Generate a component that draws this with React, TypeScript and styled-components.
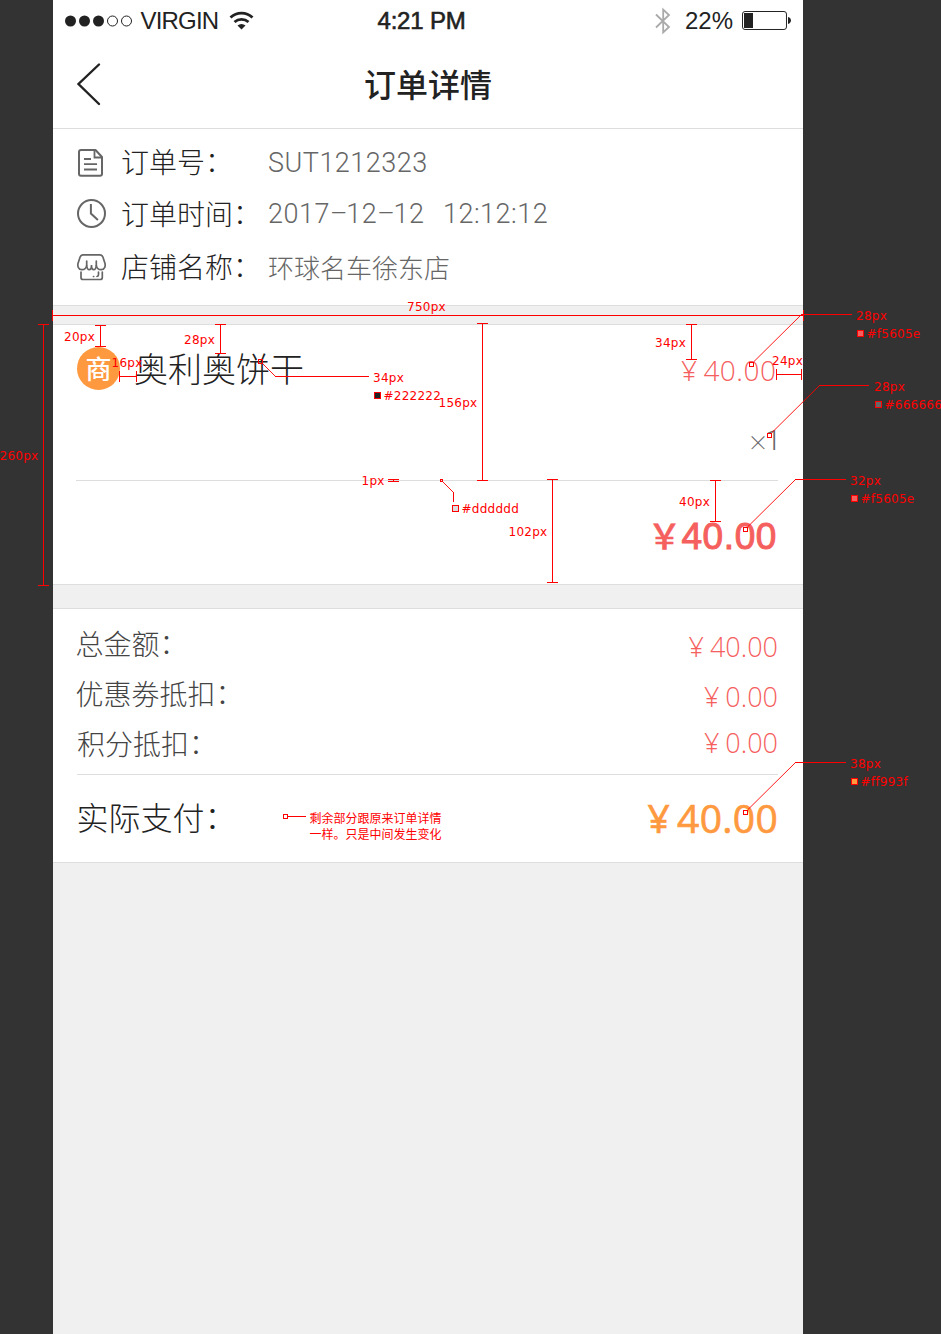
import React from "react";
import styled, { createGlobalStyle } from "styled-components";

const CJK = '"Noto Sans CJK SC", sans-serif';
const HELV = '"Liberation Sans", sans-serif';
const OPEN = '"Open Sans", "Noto Sans CJK SC", sans-serif';

const GlobalStyle = createGlobalStyle`
  * { box-sizing: border-box; }
  body { margin: 0; background: #333; overflow: hidden; }
`;

const Board = styled.main`
  position: relative;
  width: 941px;
  height: 1334px;
  padding-left: 53px;
  background: #333;
  overflow: hidden;
`;

const Phone = styled.div`
  width: 750px;
  height: 1334px;
  background: #f0f0f0;
  color: #222;
  font-family: ${CJK};
`;

const StatusBar = styled.div`
  display: grid;
  grid-template-columns: 312.5px 1fr 137px;
  align-items: center;
  height: 40px;
  padding: 1px 11px 0 12px;
  background: #fff;
  font: 24px/40px ${HELV};
`;

const StatusGroup = styled.div`
  display: flex;
  align-items: center;
  height: 40px;
`;

const StatusText = styled.span<{ $left?: number; $spacing?: number; $stroke?: number }>`
  margin-left: ${(p) => p.$left ?? 0}px;
  letter-spacing: ${(p) => p.$spacing ?? 0}px;
  -webkit-text-stroke: ${(p) => p.$stroke ?? 0}px #222;
  white-space: nowrap;
`;

const WifiIcon = styled.svg`
  margin-left: 11px;
`;

const BatteryIcon = styled.svg`
  margin-left: 9px;
`;

const NavBar = styled.header`
  display: grid;
  grid-template-columns: 88px 1fr 88px;
  align-items: center;
  height: 89px;
  border-bottom: 1px solid #ddd;
  background: #fff;
`;

const Title = styled.h1`
  margin: 0;
  padding-bottom: 2px;
  text-align: center;
  font: 500 32px/86px ${CJK};
`;

const BackIcon = styled.svg`
  margin-left: 23px;
`;

const Info = styled.section`
  height: 177px;
  padding: 8px 24px 0 23px;
  border-bottom: 1px solid #ddd;
  background: #fff;
`;

const InfoRow = styled.div<{ $height: number }>`
  display: grid;
  grid-template-columns: 45px 147px 1fr;
  align-items: center;
  height: ${(p) => p.$height}px;
`;

const Label = styled.span<{ $drop?: number }>`
  padding: ${(p) => p.$drop ?? 0}px 0 4px;
  font: 300 28px/44px ${CJK};
  white-space: pre;
`;

const Colon = styled.span`
  line-height: 1;
  vertical-align: 1px;
`;

const Value = styled.span<{ $cjk?: boolean }>`
  color: #666;
  font: 300 ${(p) => (p.$cjk ? 26 : 27)}px/50px ${(p) => (p.$cjk ? CJK : "Roboto, sans-serif")};
  letter-spacing: ${(p) => (p.$cjk ? 0 : 0.5)}px;
  word-spacing: 2.2px;
  white-space: pre;
`;

const Dash = styled.span`
  letter-spacing: -1.3px;
`;

const Panel = styled.section<{ $gap: number }>`
  margin-top: ${(p) => p.$gap}px;
  border-top: 1px solid #ddd;
  border-bottom: 1px solid #ddd;
  background: #fff;
`;

const Product = styled.div`
  display: grid;
  grid-template-columns: 44px 1fr auto;
  grid-template-rows: 87px 67px;
  column-gap: 14px;
  height: 156px;
  margin: 0 25px 0 23px;
  border-bottom: 1px solid #ddd;
`;

const Badge = styled.span`
  align-self: center;
  width: 43px;
  height: 43px;
  margin-left: 1px;
  border-radius: 50%;
  background: #ff993f;
  color: #fff;
  text-align: center;
  font: 500 26px/42px ${CJK};
`;

const ProductName = styled.span`
  padding-bottom: 2px;
  font: 300 34px/85px ${CJK};
`;

const Quantity = styled.span`
  grid-column: 3;
  justify-self: end;
  display: flex;
  margin-right: -3px;
  color: #666;
  font: 300 28px/58px Roboto, sans-serif;
`;

const Times = styled.span`
  margin-right: -3px;
  font: 300 21px/59px ${CJK};
`;

const Price = styled.span<{ $shift?: number }>`
  display: flex;
  align-items: baseline;
  justify-content: flex-end;
  margin-top: ${(p) => p.$shift ?? 0}px;
  color: #f5605e;
  font: 300 27px/50px ${OPEN};
  white-space: nowrap;
`;

const ProductPrice = styled(Price)`
  align-self: center;
  padding: 2px 1.5px 0 0;
  font-size: 28px;
  letter-spacing: 0.5px;
`;

const Yen = styled.span<{ $gap: number }>`
  margin-right: ${(p) => p.$gap}px;
`;

const WideYen = styled.span`
  font: 500 34px/1 ${CJK};
  letter-spacing: 0;
  -webkit-text-stroke: 0.5px #f5605e;
`;

const Subtotal = styled.div`
  display: flex;
  align-items: baseline;
  justify-content: flex-end;
  height: 103px;
  padding: 4px 26px 0 0;
  color: #f5605e;
  font: 37px/103px ${HELV};
  letter-spacing: 0.6px;
  -webkit-text-stroke: 1px #f5605e;
`;

const Summary = styled.div`
  height: 166px;
  margin: 0 25px 0 24px;
  padding-top: 10px;
  border-bottom: 1px solid #ddd;
`;

const SummaryRow = styled.div<{ $shift?: number }>`
  display: flex;
  justify-content: space-between;
  align-items: flex-start;
  height: 50px;
  margin-left: ${(p) => p.$shift ?? 0}px;
  color: #444;
`;

const Payment = styled.div`
  display: flex;
  justify-content: space-between;
  align-items: flex-start;
  height: 87px;
  margin: 0 25px 0 23.5px;
  font: 300 32px/82px ${CJK};
`;

const PaymentPrice = styled(Price)`
  color: #ff993f;
  font: 500 39px/86px ${OPEN};
  letter-spacing: 0.3px;
  -webkit-text-stroke: 0.7px #ff993f;
`;

const Overlay = styled.svg`
  position: absolute;
  inset: 0;
  pointer-events: none;
`;

const Tag = styled.span<{ $x: number; $y: number }>`
  position: absolute;
  left: ${(p) => p.$x}px;
  top: ${(p) => p.$y}px;
  color: #f00;
  font: 12px/14px "DejaVu Sans", sans-serif;
  letter-spacing: 0.25px;
  white-space: nowrap;
`;

const Note = styled.p`
  position: absolute;
  left: 309.5px;
  top: 810px;
  margin: 0;
  color: #f00;
  font: 12px/16px ${CJK};
  white-space: nowrap;
`;

const RowDoc = () => (
  <svg width="30" height="30" viewBox="0 0 30 30" fill="none" stroke="#666" strokeWidth="2">
    <path d="M5 2H19.500L26 9v16.700a2 2 0 0 1-2 2H5a2 2 0 0 1-2-2V4a2 2 0 0 1 2-2Z" strokeLinejoin="round" />
    <path d="M18.500 2v7.500h7.500M8 11h7M8 16.200h13M8 21.500h13" strokeWidth="1.800" />
  </svg>
);

const RowClock = () => (
  <svg width="30" height="30" viewBox="0 0 30 30" fill="none" stroke="#666" strokeWidth="2">
    <circle cx="15.500" cy="14.500" r="13.500" />
    <path d="M14.900 5v9.500l7 6.500" />
  </svg>
);

const RowShop = () => (
  <svg width="30" height="30" viewBox="0 0 30 30" fill="none" stroke="#666" strokeWidth="1.7" strokeLinecap="round">
    <path d="M7 2.800h17c1.300 0 2.300.8 2.900 2.200L29 11.500c.6 2.700-.4 6.200-3.800 6.200-3 0-4.700-2-4.900-4.700-.2 2.800-.9 4.700-2.500 4.700s-2.300-2-2.300-4.700c0 2.700-.7 4.700-2.300 4.700s-2.300-1.900-2.500-4.700c-.2 2.700-1.900 4.700-4.900 4.700-3.400 0-4.400-3.500-3.800-6.200L4.100 5c.6-1.400 1.600-2.200 2.900-2.200Z" />
    <path d="M10.700 13V9M20.300 13V9M5 20v5.500c0 1.200.8 2 2 2h17.300c1.200 0 2-.8 2-2V20M22.500 20v2.800c0 1-.6 1.600-1.500 1.700M17.500 24.500h.2" />
  </svg>
);

type Dim = [number, number, number];
const vertical: Dim[] = [
  [100, 325, 346], [220, 324, 353], [43, 324, 585], [482, 323, 480],
  [691, 324, 359], [552, 479, 582], [715, 480, 521],
];
const horizontal: Dim[] = [[315, 52, 803], [376, 119, 136], [374, 776, 801]];

const vPath = ([x, a, b]: Dim) =>
  `M${x + 0.5} ${a}V${b + 1}M${x - 5} ${a + 0.5}h11M${x - 5} ${b + 0.5}h11`;
const hPath = ([y, a, b]: Dim) =>
  `M${a} ${y + 0.5}H${b + 1}M${a + 0.5} ${y - 5}v11M${b + 0.5} ${y - 5}v11`;

const leaders = [
  { box: [258, 359], line: "M263 364L275.500 376.500", run: "M275 376.500H369" },
  { box: [749, 362], line: "M754 361.500L801.500 314.500", run: "M801 314.500H852" },
  { box: [767, 433], line: "M772 432.500L819.500 385.500", run: "M819 385.500H869" },
  { box: [743, 527], line: "M748 526.500L795.500 479.500", run: "M795 479.500H846" },
  { box: [743, 810], line: "M748 809.500L795.500 762.500", run: "M795 762.500H846" },
  { box: [283, 814], line: "", run: "M288 816.500H306" },
];

const swatches: [number, number, string][] = [
  [374, 392, "#222222"], [857, 330, "#f5605e"], [875, 401, "#666666"],
  [452, 505, "#dddddd"], [851, 495, "#f5605e"], [851, 778, "#ff993f"],
];

const tags: [number, number, string][] = [
  [407, 300, "750px"], [64, 330, "20px"], [184, 333, "28px"], [-0.5, 449, "260px"],
  [111.5, 356, "16px"], [373, 371, "34px"], [383.5, 389, "#222222"], [438.5, 396, "156px"],
  [655, 336, "34px"], [772, 354, "24px"], [856, 309, "28px"], [866.5, 327, "#f5605e"],
  [874, 380, "28px"], [884.5, 398, "#666666"], [361.5, 474, "1px"], [461.5, 502, "#dddddd"],
  [508.5, 525, "102px"], [679, 495, "40px"], [850, 474, "32px"], [860.5, 492, "#f5605e"],
  [850, 757, "38px"], [860.5, 775, "#ff993f"],
];

const Annotations = () => (
  <>
    <Overlay width="941" height="1334" fill="none" stroke="#f00">
      {vertical.map((d) => <path key={d.join()} d={vPath(d)} />)}
      {horizontal.map((d) => <path key={d.join()} d={hPath(d)} />)}
      {leaders.map(({ box: [x, y], line, run }) => (
        <g key={`${x}-${y}`}>
          <rect x={x + 0.5} y={y + 0.5} width="4" height="4" />
          {line && <path d={line} strokeWidth="0.9" />}
          <path d={run} />
        </g>
      ))}
      <path d="M388 479.500h11M388 481.500h11M393.500 480v1" />
      <rect x="440.500" y="479.500" width="2" height="2" />
      <path d="M443 482L453.500 492.500" strokeWidth="0.9" />
      <path d="M453.500 492V502" />
      {swatches.map(([x, y, c]) => (
        <rect key={`${x}-${y}`} x={x + 0.5} y={y + 0.5} width="6" height="6" fill={c} />
      ))}
    </Overlay>
    {tags.map(([x, y, text]) => (
      <Tag key={`${x}-${y}`} $x={x} $y={y}>{text}</Tag>
    ))}
    <Note>剩余部分跟原来订单详情<br />一样。只是中间发生变化</Note>
  </>
);

export default function App() {
  return (
    <>
      <GlobalStyle />
      <Board>
        <Phone>
          <StatusBar>
            <StatusGroup>
              <svg width="68" height="12" fill="#222">
                <circle cx="5.500" cy="6" r="5.500" />
                <circle cx="19.500" cy="6" r="5.500" />
                <circle cx="33.500" cy="6" r="5.500" />
                <circle cx="47.500" cy="6" r="5" fill="none" stroke="#222" />
                <circle cx="61.500" cy="6" r="5" fill="none" stroke="#222" />
              </svg>
              <StatusText $left={7.5} $spacing={-0.8}>VIRGIN</StatusText>
              <WifiIcon width="26" height="20" viewBox="0 0 26 20" fill="none" stroke="#222" strokeWidth="2.800">
                <path d="M1.500 6.500a16 16 0 0 1 22 0M5.500 11a10.500 10.500 0 0 1 14 0" />
                <path d="M12.500 18.500l-4-4a6 6 0 0 1 8 0Z" fill="#222" stroke="none" />
              </WifiIcon>
            </StatusGroup>
            <StatusText $spacing={-0.2} $stroke={0.6}>4:21 PM</StatusText>
            <StatusGroup>
              <svg width="16" height="28" viewBox="0 0 16 28" fill="none" stroke="#aaa" strokeWidth="1.800">
                <path d="M1 7.500L14 20l-5.800 5.500V2.500L14 8 1 20.500" />
              </svg>
              <StatusText $left={14}>22%</StatusText>
              <BatteryIcon width="50" height="20" viewBox="0 0 50 20">
                <rect x=".5" y=".5" width="44" height="18" rx="2.500" fill="none" stroke="#222" />
                <rect x="2" y="2" width="9" height="15" fill="#222" />
                <path d="M46 6c4 1 4 6 0 7Z" fill="#222" />
              </BatteryIcon>
            </StatusGroup>
          </StatusBar>
          <NavBar>
            <BackIcon width="26" height="44" fill="none" stroke="#222" strokeWidth="2.400" strokeLinecap="round">
              <path d="M23 2.500L2.500 22 23 42" />
            </BackIcon>
            <Title>订单详情</Title>
          </NavBar>
          <Info>
            <InfoRow $height={52}><RowDoc /><Label>订单号<Colon>：</Colon></Label><Value>SUT1212323</Value></InfoRow>
            <InfoRow $height={50}>
              <RowClock /><Label $drop={2}>订单时间<Colon>：</Colon></Label>
              <Value>2017<Dash>–</Dash>12<Dash>–</Dash>12  12:12:12</Value>
            </InfoRow>
            <InfoRow $height={56}><RowShop /><Label $drop={2}>店铺名称<Colon>：</Colon></Label><Value $cjk>环球名车徐东店</Value></InfoRow>
          </Info>
          <Panel $gap={18}>
            <Product>
              <Badge>商</Badge>
              <ProductName>奥利奥饼干</ProductName>
              <ProductPrice><Yen $gap={6}>¥</Yen>40.00</ProductPrice>
              <Quantity><Times>×</Times><span>1</span></Quantity>
            </Product>
            <Subtotal><WideYen>￥</WideYen>40.00</Subtotal>
          </Panel>
          <Panel $gap={23}>
            <Summary>
              <SummaryRow $shift={-1.5}><Label $drop={2}>总金额<Colon>：</Colon></Label><Price $shift={3}><Yen $gap={6}>¥</Yen>40.00</Price></SummaryRow>
              <SummaryRow $shift={-1.5}><Label $drop={2}>优惠劵抵扣<Colon>：</Colon></Label><Price $shift={2.5}><Yen $gap={6}>¥</Yen>0.00</Price></SummaryRow>
              <SummaryRow><Label $drop={2}>积分抵扣<Colon>：</Colon></Label><Price $shift={-1}><Yen $gap={6}>¥</Yen>0.00</Price></SummaryRow>
            </Summary>
            <Payment>
              <span>实际支付<Colon>：</Colon></span>
              <PaymentPrice><Yen $gap={7}>¥</Yen>40.00</PaymentPrice>
            </Payment>
          </Panel>
        </Phone>
        <Annotations />
      </Board>
    </>
  );
}
